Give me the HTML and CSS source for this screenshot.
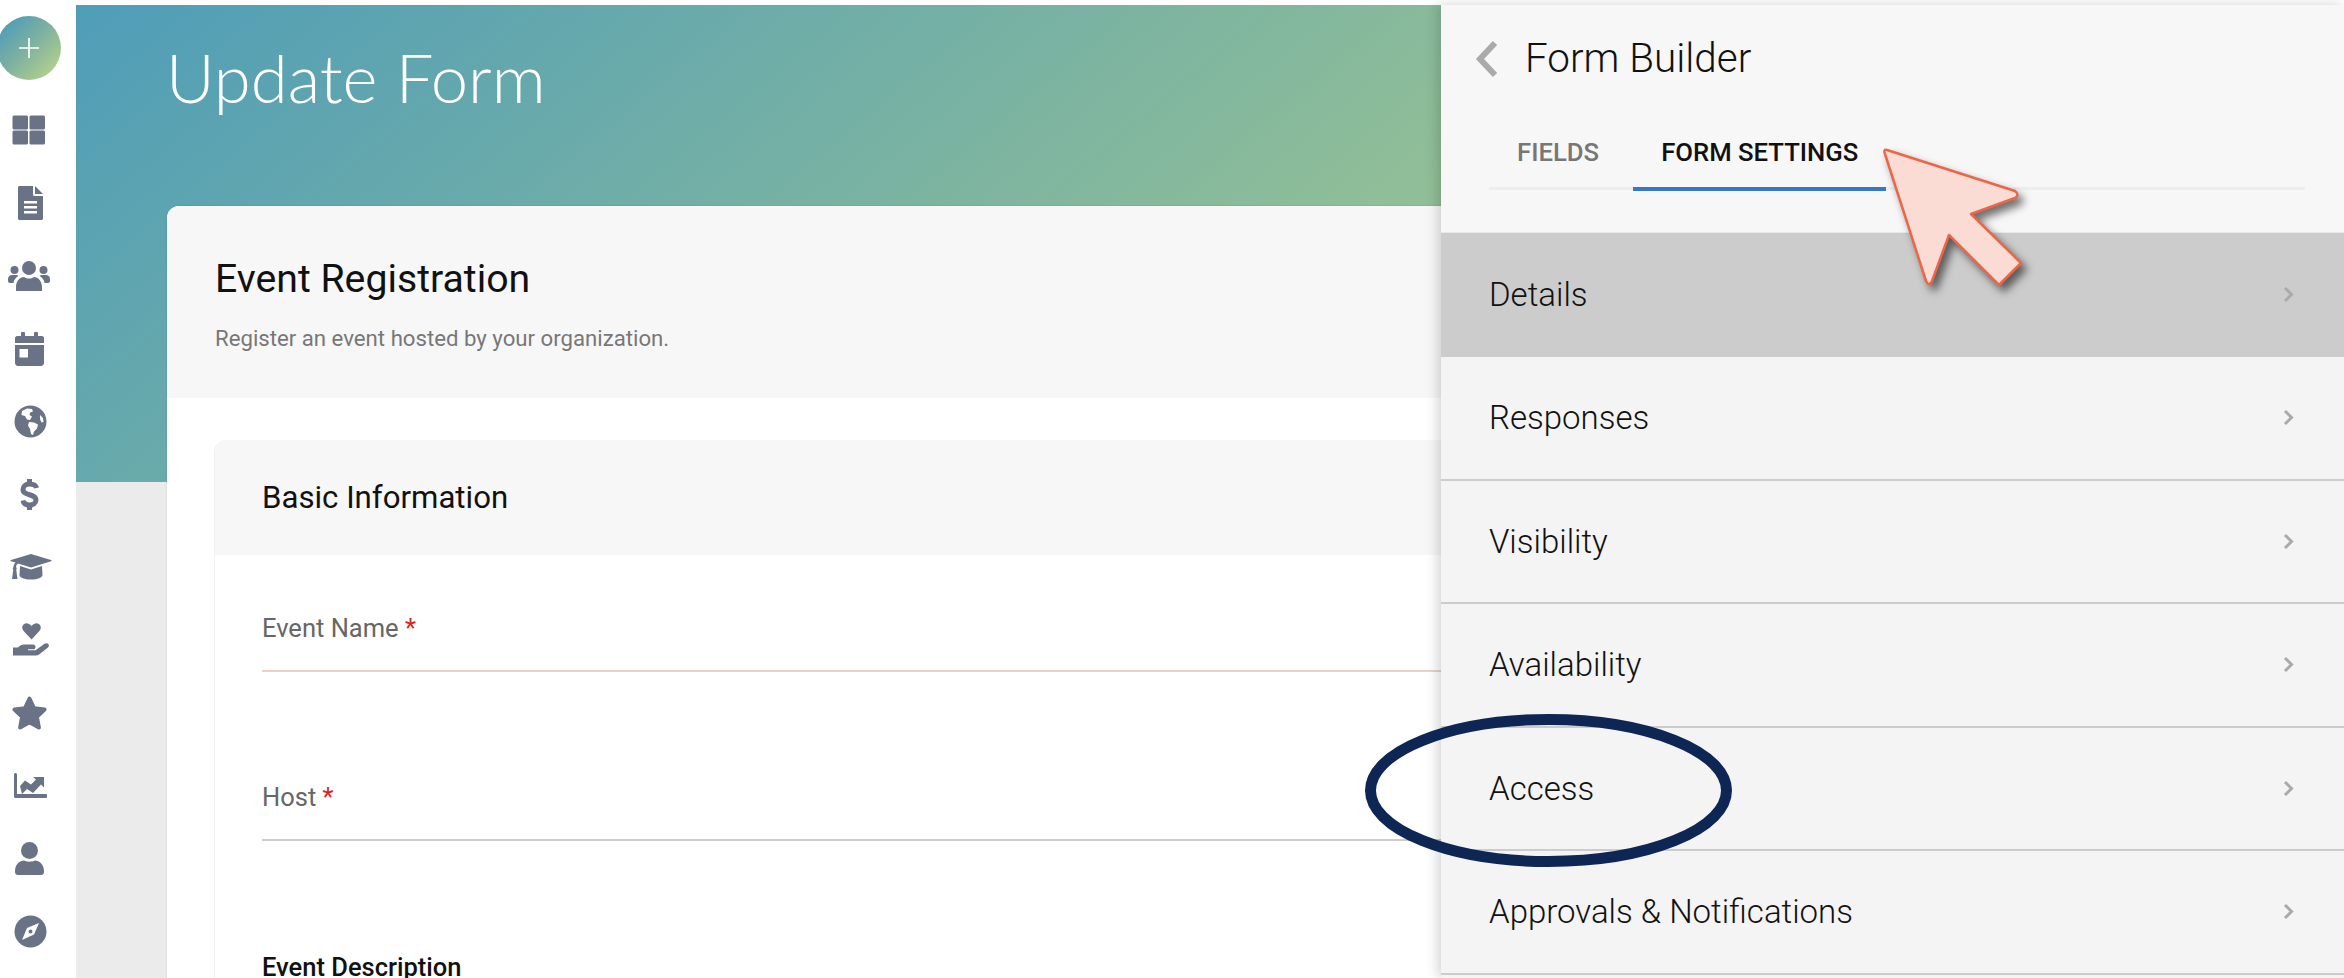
FILE: index.html
```html
<!DOCTYPE html>
<html lang="en">
<head>
<meta charset="utf-8">
<title>Update Form</title>
<link rel="stylesheet" href="styles.css">
</head>
<body>
<div class="app">
  <nav class="sidebar">
    <div class="add-btn"><svg viewBox="0 0 24 24" class="plus"><path d="M12 2v20M2 12h20"/></svg></div>
    <ul class="nav-list">
      <li class="nav-item"><svg class="ico" width="34" height="30" viewBox="0 0 34 30"><rect x="0.5" y="0.5" width="15.5" height="14" rx="1.5"/><rect x="17.5" y="0.5" width="15.5" height="14" rx="1.5"/><rect x="0.5" y="15.5" width="15.5" height="14" rx="1.5"/><rect x="17.5" y="15.5" width="15.5" height="14" rx="1.5"/></svg></li>
      <li class="nav-item nudge"><svg class="ico" width="25" height="34" viewBox="0 0 25 34"><path d="M1.500 0H15v8.500c0 .8.700 1.500 1.500 1.500H25v22.500c0 .8-.7 1.500-1.500 1.500h-22C.7 34 0 33.300 0 32.500V1.500C0 .7.700 0 1.500 0z"/><path d="M17 0l8 8h-8z"/><path class="cut" d="M6 15h13v2.400H6zM6 20h13v2.400H6zM6 25h13v2.400H6z"/></svg></li>
      <li class="nav-item"><svg class="ico" width="42" height="30" viewBox="0 0 42 30"><circle cx="21" cy="7" r="7"/><path d="M8 30v-4c0-6 4-10 8-10 2 1 3 1.500 5 1.500s3-.5 5-1.500c4 0 8 4 8 10v4H8z"/><circle cx="6.500" cy="9" r="4"/><circle cx="35.500" cy="9" r="4"/><path d="M0 18c0-2.500 2-4 4-4h4c1 0 1.800.4 2.500 1-2.800 1.500-4.600 4-5 7H2c-1 0-2-1-2-2zM42 18c0-2.500-2-4-4-4h-4c-1 0-1.800.4-2.500 1 2.800 1.500 4.600 4 5 7H40c1 0 2-1 2-2z"/></svg></li>
      <li class="nav-item"><svg class="ico" width="29" height="34" viewBox="0 0 29 34"><rect x="6" y="0" width="4" height="7" rx="1"/><rect x="19" y="0" width="4" height="7" rx="1"/><path d="M2 4h25c1 0 2 1 2 2v5H0V6c0-1 1-2 2-2zM0 13h29v18c0 1.500-1.300 3-3 3H3c-1.700 0-3-1.500-3-3z"/><rect class="cut" x="4.500" y="17" width="8.500" height="8.500"/></svg></li>
      <li class="nav-item nudge"><svg class="ico" width="33" height="33" viewBox="0 0 33 33"><circle cx="16.500" cy="16.500" r="16"/><path class="cut" d="M8 6l5-2.500 5 .5 1 2.500-3 1-.5 2.500 2.500 1.500-2 3.500-3-.5-2-3.500-3.500-1zM15 17l5 .5 4 2-1 4-3 3-1 3.500-2-1-1-5-2-3.500zM26 10l3 3 .5 4-2 .5-1.500-3.500z"/></svg></li>
      <li class="nav-item"><svg class="ico dollar" width="21" height="33" viewBox="0 0 21 33"><path d="M17.500 10C17 7.500 14 6 10.500 6 6.500 6 4 8.500 4 11.500c0 6.500 13 4 13 10.500 0 3-3 5-6.500 5-3.500 0-6-1.800-6.500-4.500"/><path d="M10.500 1v5M10.500 27v5"/></svg></li>
      <li class="nav-item nudge"><svg class="ico" width="42" height="26" viewBox="0 0 42 26"><path d="M21 0l20 6c.8.3.8 1 0 1.300L21 13.500 8 9.500c-1.300.8-1.800 2-2 3.500.8.500 1 1.800.2 2.500L7.500 25H2l1.300-9.500c-.8-.7-.6-2 .2-2.500.2-1.800.8-3.300 2-4.400L1 7.300c-.8-.3-.8-1 0-1.300z"/><path d="M10 12l11 3.500L32 12l.5 9c0 2.500-5 4.500-11.500 4.500S9.500 23.500 9.500 21z"/></svg></li>
      <li class="nav-item nudge-wide"><svg class="ico" width="38" height="33" viewBox="0 0 38 33"><path d="M18.500 16.500L10.800 8.200c-2.200-2.500-2-5.500 0-7C13 -.3 16 .2 18.500 3c2.500-2.800 5.500-3.300 7.700-1.800 2 1.500 2.200 4.500 0 7z"/><path d="M0 24.500h5c1.500-1.800 4-3 6-3h9c1.500 0 2.500 1 2.500 2.500s-1 2.300-2.500 2.300h-5v1h7.500l9-6.500c1.500-1 3.200-.5 4 .5s.5 2.300-.5 3.200l-9 7c-1 .6-2 1-3 1H0z"/></svg></li>
      <li class="nav-item"><svg class="ico star" width="35" height="34" viewBox="0 0 35 34"><path d="M17.500 2.500l4.600 9.800 10.400 1.300-7.600 7.300 2 10.600-9.400-5.300-9.400 5.300 2-10.600-7.600-7.300 10.400-1.300z"/></svg></li>
      <li class="nav-item nudge"><svg class="ico" width="33" height="25" viewBox="0 0 33 25"><path d="M0 1.500C0 .7.700 0 1.500 0S3 .7 3 1.500V21h29c.6 0 1 .5 1 1v2c0 .5-.4 1-1 1H1.500C.7 25 0 24.300 0 23.500z"/><path d="M6 13l5-5.500 6 4 5-5-3-2.500h11v10.500l-3-3-8 8.500-6-4-5 5z"/></svg></li>
      <li class="nav-item"><svg class="ico" width="29" height="33" viewBox="0 0 29 33"><circle cx="14.500" cy="8.500" r="8.500"/><path d="M0 29c0-6.500 5-10.500 9-10.500 2 .8 3.500 1.200 5.500 1.200s3.500-.4 5.500-1.200c4 0 9 4 9 10.500v1c0 1.700-1.300 3-3 3H3c-1.700 0-3-1.300-3-3z"/></svg></li>
      <li class="nav-item nudge"><svg class="ico" width="33" height="33" viewBox="0 0 33 33"><circle cx="16.500" cy="16.500" r="16"/><path class="cut" d="M25 8l-5 11.500L8 25l5-12zM16.500 14.500a2 2 0 100 4 2 2 0 000-4z" fill-rule="evenodd"/></svg></li>
    </ul>
  </nav>

  <main class="main">
    <header class="hero"><h1 class="page-title">Update Form</h1></header>
    <section class="card">
      <div class="card-head">
        <h2 class="card-title">Event Registration</h2>
        <p class="card-sub">Register an event hosted by your organization.</p>
      </div>
      <div class="card-body">
        <section class="group">
          <h3 class="group-head">Basic Information</h3>
          <div class="group-body">
            <div class="field field-error"><label class="field-label">Event Name <span class="req">*</span></label></div>
            <div class="field"><label class="field-label">Host <span class="req">*</span></label></div>
            <div class="field-title">Event Description</div>
          </div>
        </section>
      </div>
    </section>
  </main>

  <aside class="panel">
    <div class="panel-head">
      <div class="panel-title-row">
        <svg class="back" width="26" height="38" viewBox="0 0 26 38"><path d="M22 3L7 19l15 16"/></svg>
        <h2 class="panel-title">Form Builder</h2>
      </div>
      <div class="tabs">
        <div class="tab">FIELDS</div>
        <div class="tab tab-active">FORM SETTINGS</div>
      </div>
    </div>
    <ul class="rows">
      <li class="row row-active"><span>Details</span><svg class="chev" width="11" height="17" viewBox="0 0 11 17"><path d="M2 2l6.500 6.500L2 15"/></svg></li>
      <li class="row"><span>Responses</span><svg class="chev" width="11" height="17" viewBox="0 0 11 17"><path d="M2 2l6.500 6.500L2 15"/></svg></li>
      <li class="row"><span>Visibility</span><svg class="chev" width="11" height="17" viewBox="0 0 11 17"><path d="M2 2l6.500 6.500L2 15"/></svg></li>
      <li class="row"><span>Availability</span><svg class="chev" width="11" height="17" viewBox="0 0 11 17"><path d="M2 2l6.500 6.500L2 15"/></svg></li>
      <li class="row"><span>Access</span><svg class="chev" width="11" height="17" viewBox="0 0 11 17"><path d="M2 2l6.500 6.500L2 15"/></svg></li>
      <li class="row"><span>Approvals &amp; Notifications</span><svg class="chev" width="11" height="17" viewBox="0 0 11 17"><path d="M2 2l6.500 6.500L2 15"/></svg></li>
    </ul>
  </aside>

  <svg class="annotations" width="2344" height="978" viewBox="0 0 2344 978">
    <path class="arrow" d="M1887 150Q1883 149 1885 154L1926 281Q1929 287 1932 281L1949 235L1999 285L2021 263L1971 214L2015 198Q2020 195 2015 191Z"/>
    <ellipse class="ring" cx="1548.500" cy="790.500" rx="178" ry="71"/>
  </svg>
</div>
</body>
</html>
```
FILE: styles.css
```css
* { box-sizing: border-box; }
html, body { margin: 0; height: 100%; }
body { background: #fff; font-family: Roboto, "Liberation Sans", sans-serif; overflow: hidden; }
h1, h2, h3, p, ul { margin: 0; padding: 0; }
ul { list-style: none; }

.app { position: relative; display: flex; width: 2344px; height: 978px; padding-top: 5px; overflow: hidden; }

/* sidebar */
.sidebar { flex: 0 0 76px; background: #fff; display: flex; flex-direction: column; margin-top: -5px; padding-top: 16px; }
.add-btn { width: 64px; height: 64px; margin-left: -3px; border-radius: 50%; background: linear-gradient(135deg, #4e9cb8 10%, #7fb2a0 50%, #bcd58a 95%); display: flex; align-items: center; justify-content: center; }
.plus { width: 24px; height: 24px; fill: none; stroke: #fff; stroke-width: 1.700; }
.nav-list { margin-top: 14px; display: flex; flex-direction: column; }
.nav-item { height: 72.800px; display: flex; align-items: center; justify-content: center; width: 58px; }
.nudge { padding-left: 3px; }
.nudge-wide { padding-left: 6px; }
.ico { fill: #6a7286; }
.ico .cut { fill: #fff; }
.dollar { fill: none; stroke: #6a7286; stroke-width: 5; stroke-linecap: butt; }
.star { stroke: #6a7286; stroke-width: 4; stroke-linejoin: round; }

/* main */
.main { flex: 0 0 1365px; background: #ebebeb; overflow: hidden; }
.hero { height: 477px; padding: 32px 0 0 90px; background: linear-gradient(140deg, #4f9db8 0%, #a0c68f 100%); }
.page-title { font-family: Lato, Roboto, sans-serif; font-weight: 300; font-size: 67px; line-height: 80px; color: #fff; }
.card { width: 1400px; height: 800px; margin: -276px 0 0 91px; background: #fff; border-radius: 12px 0 0 0; overflow: hidden; box-shadow: 0 0 2px rgba(0, 0, 0, .15); }
.card-head { height: 192px; padding: 50px 0 0 48px; background: #f7f7f7; }
.card-title { font-weight: 400; font-size: 39.200px; line-height: 46px; color: #111; }
.card-sub { margin-top: 22px; font-size: 22.200px; line-height: 28px; color: #777; }
.card-body { padding: 42px 0 0 47px; }
.group { border-left: 1px solid #f0f0f0; border-radius: 12px 0 0 0; overflow: hidden; }
.group-head { height: 115px; padding-left: 47px; background: #f7f7f7; font-weight: 400; font-size: 31.200px; line-height: 115px; color: #111; }
.group-body { padding: 51px 0 0 47px; }
.field { height: 169px; }
.field-label { display: block; height: 66px; border-bottom: 2px solid #ccc; font-size: 25.500px; line-height: 45px; color: #666; }
.field-error .field-label { border-bottom-color: #ecd0ca; }
.req { color: #d22; }
.field-title { margin-top: 8px; font-weight: 500; font-size: 25.500px; line-height: 30px; color: #111; }

/* panel */
.panel { position: relative; flex: 0 0 903px; background: #f4f4f4; box-shadow: -3px 0 12px rgba(0, 0, 0, .18); }
.panel-head { height: 227px; padding: 31px 39px 0 48px; background: #f7f7f7; }
.panel-title-row { display: flex; align-items: center; gap: 26px; height: 46px; }
.back { fill: none; stroke: #aaa; stroke-width: 6; margin-left: -16px; }
.panel-title { font-weight: 300; font-size: 40.400px; line-height: 46px; color: #111; }
.tabs { display: flex; align-items: flex-start; gap: 6px; margin-top: 44px; border-bottom: 3px solid #eee; height: 64px; }
.tab { height: 65px; padding: 0 28px; font-weight: 500; font-size: 25.700px; line-height: 52px; color: #777; }
.tab-active { color: #111; border-bottom: 4px solid #3a76c8; }
.rows { display: flex; flex-direction: column; }
.row { height: 123.500px; padding: 0 50px 0 48px; display: flex; align-items: center; justify-content: space-between; border-bottom: 2px solid #ccc; font-weight: 300; font-size: 33px; color: #111; }
.row-active { height: 125px; background: #ccc; border-top: 1px solid #e8e8e8; }
.chev { fill: none; stroke: #aaa; stroke-width: 3; }

/* annotations */
.annotations { position: absolute; left: 0; top: 0; pointer-events: none; }
.arrow { fill: #fadcd5; stroke: #ee6545; stroke-width: 2.500; stroke-linejoin: round; filter: drop-shadow(5px 6px 4px rgba(0, 0, 0, .55)); }
.ring { fill: none; stroke: #0d2653; stroke-width: 11; }
```
